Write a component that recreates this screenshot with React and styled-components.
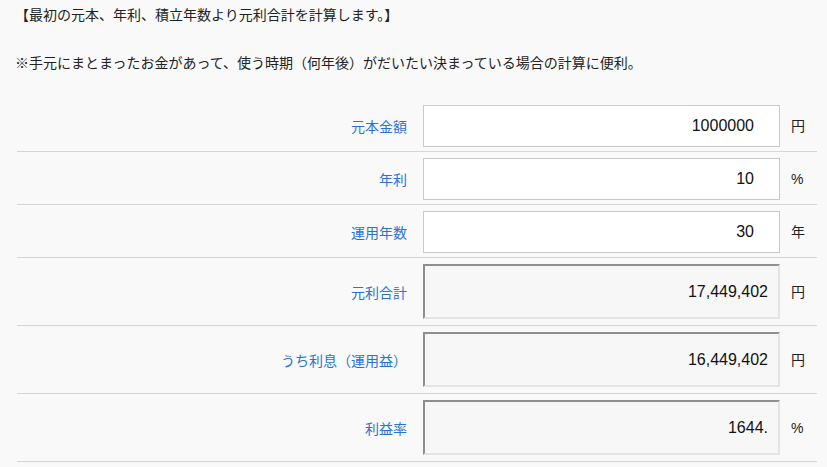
import React from 'react';
import styled, { createGlobalStyle } from 'styled-components';

const GlobalStyle = createGlobalStyle`
  html, body {
    margin: 0;
    padding: 0;
    background: #f9f9f9;
  }
  body {
    font-family: "Noto Sans CJK JP", "Noto Sans", sans-serif;
    color: #222;
  }
`;

const Page = styled.div`
  padding: 4px 10px 0 15px;
`;

const Lead = styled.p`
  margin: 0;
  font-size: 14px;
  line-height: 21px;
  color: #222;
`;

const Note = styled(Lead)`
  margin-top: 27px;
`;

const Table = styled.div`
  margin: 26px 0 0 2px;
  width: 800px;
`;

const Row = styled.div`
  display: grid;
  grid-template-columns: 406px 357px 1fr;
  align-items: center;
  padding: ${p => (p.$result ? '6px 0 6px' : '6px 0 4px')};
  border-bottom: 1px solid #d6d6d6;
`;

const Label = styled.div`
  text-align: right;
  padding-right: 16px;
  font-size: 14px;
  line-height: 20px;
  color: #2a73cf;
`;

const Field = styled.input`
  box-sizing: border-box;
  width: 357px;
  height: ${p => (p.readOnly ? '55px' : '42px')};
  margin: 0;
  font-family: "Liberation Sans", Arial, sans-serif;
  font-size: 16px;
  color: #111;
  text-align: right;
  outline: none;
  background: ${p => (p.readOnly ? '#f7f7f7' : '#fff')};
  padding: ${p => (p.readOnly ? '0 10px 0 0' : '0 25px 0 0')};
  border: ${p => (p.readOnly ? '2px solid' : '1px solid #c9c9c9')};
  border-color: ${p => (p.readOnly ? '#8e8e8e #e4e4e4 #e4e4e4 #8e8e8e' : '#c9c9c9')};
`;

const Unit = styled.div`
  padding-left: 11px;
  font-size: 14px;
  line-height: 20px;
  color: #222;
  font-family: "Liberation Sans", "Noto Sans CJK JP", sans-serif;
`;

const rows = [
  { label: '元本金額', value: '1000000', unit: '円' },
  { label: '年利', value: '10', unit: '%' },
  { label: '運用年数', value: '30', unit: '年' },
  { label: '元利合計', value: '17,449,402', unit: '円', result: true },
  { label: 'うち利息（運用益）', value: '16,449,402', unit: '円', result: true },
  { label: '利益率', value: '1644.', unit: '%', result: true },
];

export default function App() {
  return (
    <>
      <GlobalStyle />
      <Page>
        <Lead>【最初の元本、年利、積立年数より元利合計を計算します。】</Lead>
        <Note>※手元にまとまったお金があって、使う時期（何年後）がだいたい決まっている場合の計算に便利。</Note>
        <Table>
          {rows.map(r => (
            <Row key={r.label} $result={!!r.result}>
              <Label>{r.label}</Label>
              <Field type="text" defaultValue={r.value} readOnly={!!r.result} />
              <Unit>{r.unit}</Unit>
            </Row>
          ))}
        </Table>
      </Page>
    </>
  );
}
